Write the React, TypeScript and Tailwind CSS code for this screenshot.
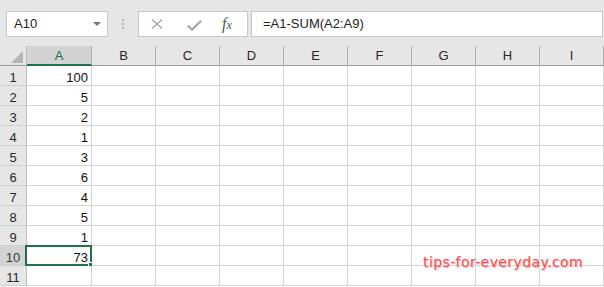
import React from "react";

const COLS = ["A", "B", "C", "D", "E", "F", "G", "H", "I"];
const VALUES: Record<number, string> = {
  1: "100",
  2: "5",
  3: "2",
  4: "1",
  5: "3",
  6: "6",
  7: "4",
  8: "5",
  9: "1",
  10: "73",
};

const ui = { fontFamily: '"Liberation Sans", Arial, sans-serif' };

function TopBar() {
  return (
    <div className="flex h-[46px] items-start bg-[#e6e6e6] pt-[11px]">
      {/* name box */}
      <div className="ml-[6px] flex h-[26px] w-[102px] items-center justify-between border border-[#c6c6c6] bg-white pl-[7px] pr-[6px] text-[13px] text-[#222]">
        <span>A10</span>
        <svg width="8" height="4" viewBox="0 0 8 4">
          <path d="M0 0H8L4 4Z" fill="#777" />
        </svg>
      </div>
      {/* grip dots */}
      <div className="ml-[14px] mt-[8px] flex w-[2px] flex-col gap-[2px]">
        <div className="h-[2px] w-[2px] bg-[#b3b3b3]" />
        <div className="h-[2px] w-[2px] bg-[#b3b3b3]" />
        <div className="h-[2px] w-[2px] bg-[#b3b3b3]" />
      </div>
      {/* formula buttons */}
      <div className="ml-[14px] flex h-[26px] w-[110px] items-center border border-[#c6c6c6] bg-white">
        <svg className="ml-[12px]" width="12" height="10" viewBox="0 0 12 10">
          <path d="M1 0.5L11 9.5M11 0.5L1 9.5" stroke="#a6a6a6" strokeWidth="1.4" />
        </svg>
        <svg className="ml-[24px] mt-[2px]" width="15" height="11" viewBox="0 0 15 11">
          <path d="M0.8 5.6L5 9.6L14.2 0.8" stroke="#a6a6a6" strokeWidth="2.2" fill="none" />
        </svg>
        <span
          className="ml-[20px] text-[16px] italic leading-none text-[#555]"
          style={{ fontFamily: '"Liberation Serif", "Times New Roman", serif' }}
        >
          f<span className="text-[12px]">x</span>
        </span>
      </div>
      {/* formula input */}
      <div className="ml-[3px] flex h-[26px] w-[352px] items-center border border-[#c6c6c6] bg-white pl-[11px] text-[13px] text-[#222]">
        =A1-SUM(A2:A9)
      </div>
    </div>
  );
}

function Grid() {
  const rows = Array.from({ length: 11 }, (_, i) => i + 1);
  return (
    <div className="grid grid-cols-[27px_65px_repeat(8,64px)] auto-rows-[20px] text-[12px]">
      {/* corner */}
      <div className="relative border-b border-r border-b-[#9e9e9e] border-r-[#bdbdbd] bg-[#e6e6e6]">
        <svg className="absolute left-0 top-0" width="27" height="20" viewBox="0 0 27 20">
          <path d="M11 17L23 5V17Z" fill="#b5b5b5" />
        </svg>
      </div>
      {COLS.map((c) =>
        c === "A" ? (
          <div
            key={c}
            className="flex justify-center border-b-2 border-r border-b-[#217346] border-r-[#ababab] bg-[#d3d3d3] pt-[1px] text-[13px] leading-[18px] text-[#1e6b41]"
          >
            {c}
          </div>
        ) : (
          <div
            key={c}
            className="flex justify-center border-b border-r border-b-[#9e9e9e] border-r-[#ababab] bg-[#e6e6e6] pt-[1px] text-[13px] leading-[18px] text-[#262626]"
          >
            {c}
          </div>
        )
      )}
      {rows.map((r) => (
        <React.Fragment key={r}>
          <div
            className={
              r === 10
                ? "flex justify-center border-b border-r border-b-[#d0d0d0] border-r-[#bdbdbd] bg-[#d3d3d3] pt-[2px] text-[13px] leading-[20px] text-[#3b3b3b]"
                : "flex justify-center border-b border-r border-b-[#d0d0d0] border-r-[#bdbdbd] bg-[#e6e6e6] pt-[2px] text-[13px] leading-[20px] text-[#262626]"
            }
          >
            {r}
          </div>
          {COLS.map((c) => (
            <div
              key={c}
              className="relative flex justify-end border-b border-r border-[#d4d4d4] bg-white pr-[3px] pt-[2px] text-[13px] leading-[20px] text-[#111]"
            >
              {c === "A" ? VALUES[r] : null}
              {c === "A" && r === 10 ? (
                <>
                  <div className="absolute -bottom-[1px] -left-[2px] -right-[1px] -top-[1px] border-2 border-[#217346]" />
                  <div className="absolute -bottom-[3px] -right-[3px] h-[6px] w-[6px] border border-white bg-[#217346]" />
                </>
              ) : null}
            </div>
          ))}
        </React.Fragment>
      ))}
    </div>
  );
}

export default function App() {
  return (
    <div className="relative h-[287px] w-[604px] overflow-hidden bg-white" style={ui}>
      <TopBar />
      <Grid />
      <div
        className="absolute left-[423px] top-[252px] text-[14px] leading-[20px] tracking-[0.4px] text-[#ff4b4b]"
        style={{ fontFamily: '"DejaVu Sans", Verdana, sans-serif', textShadow: "1px 1px 0 #ffc4c4" }}
      >
        tips-for-everyday.com
      </div>
    </div>
  );
}
